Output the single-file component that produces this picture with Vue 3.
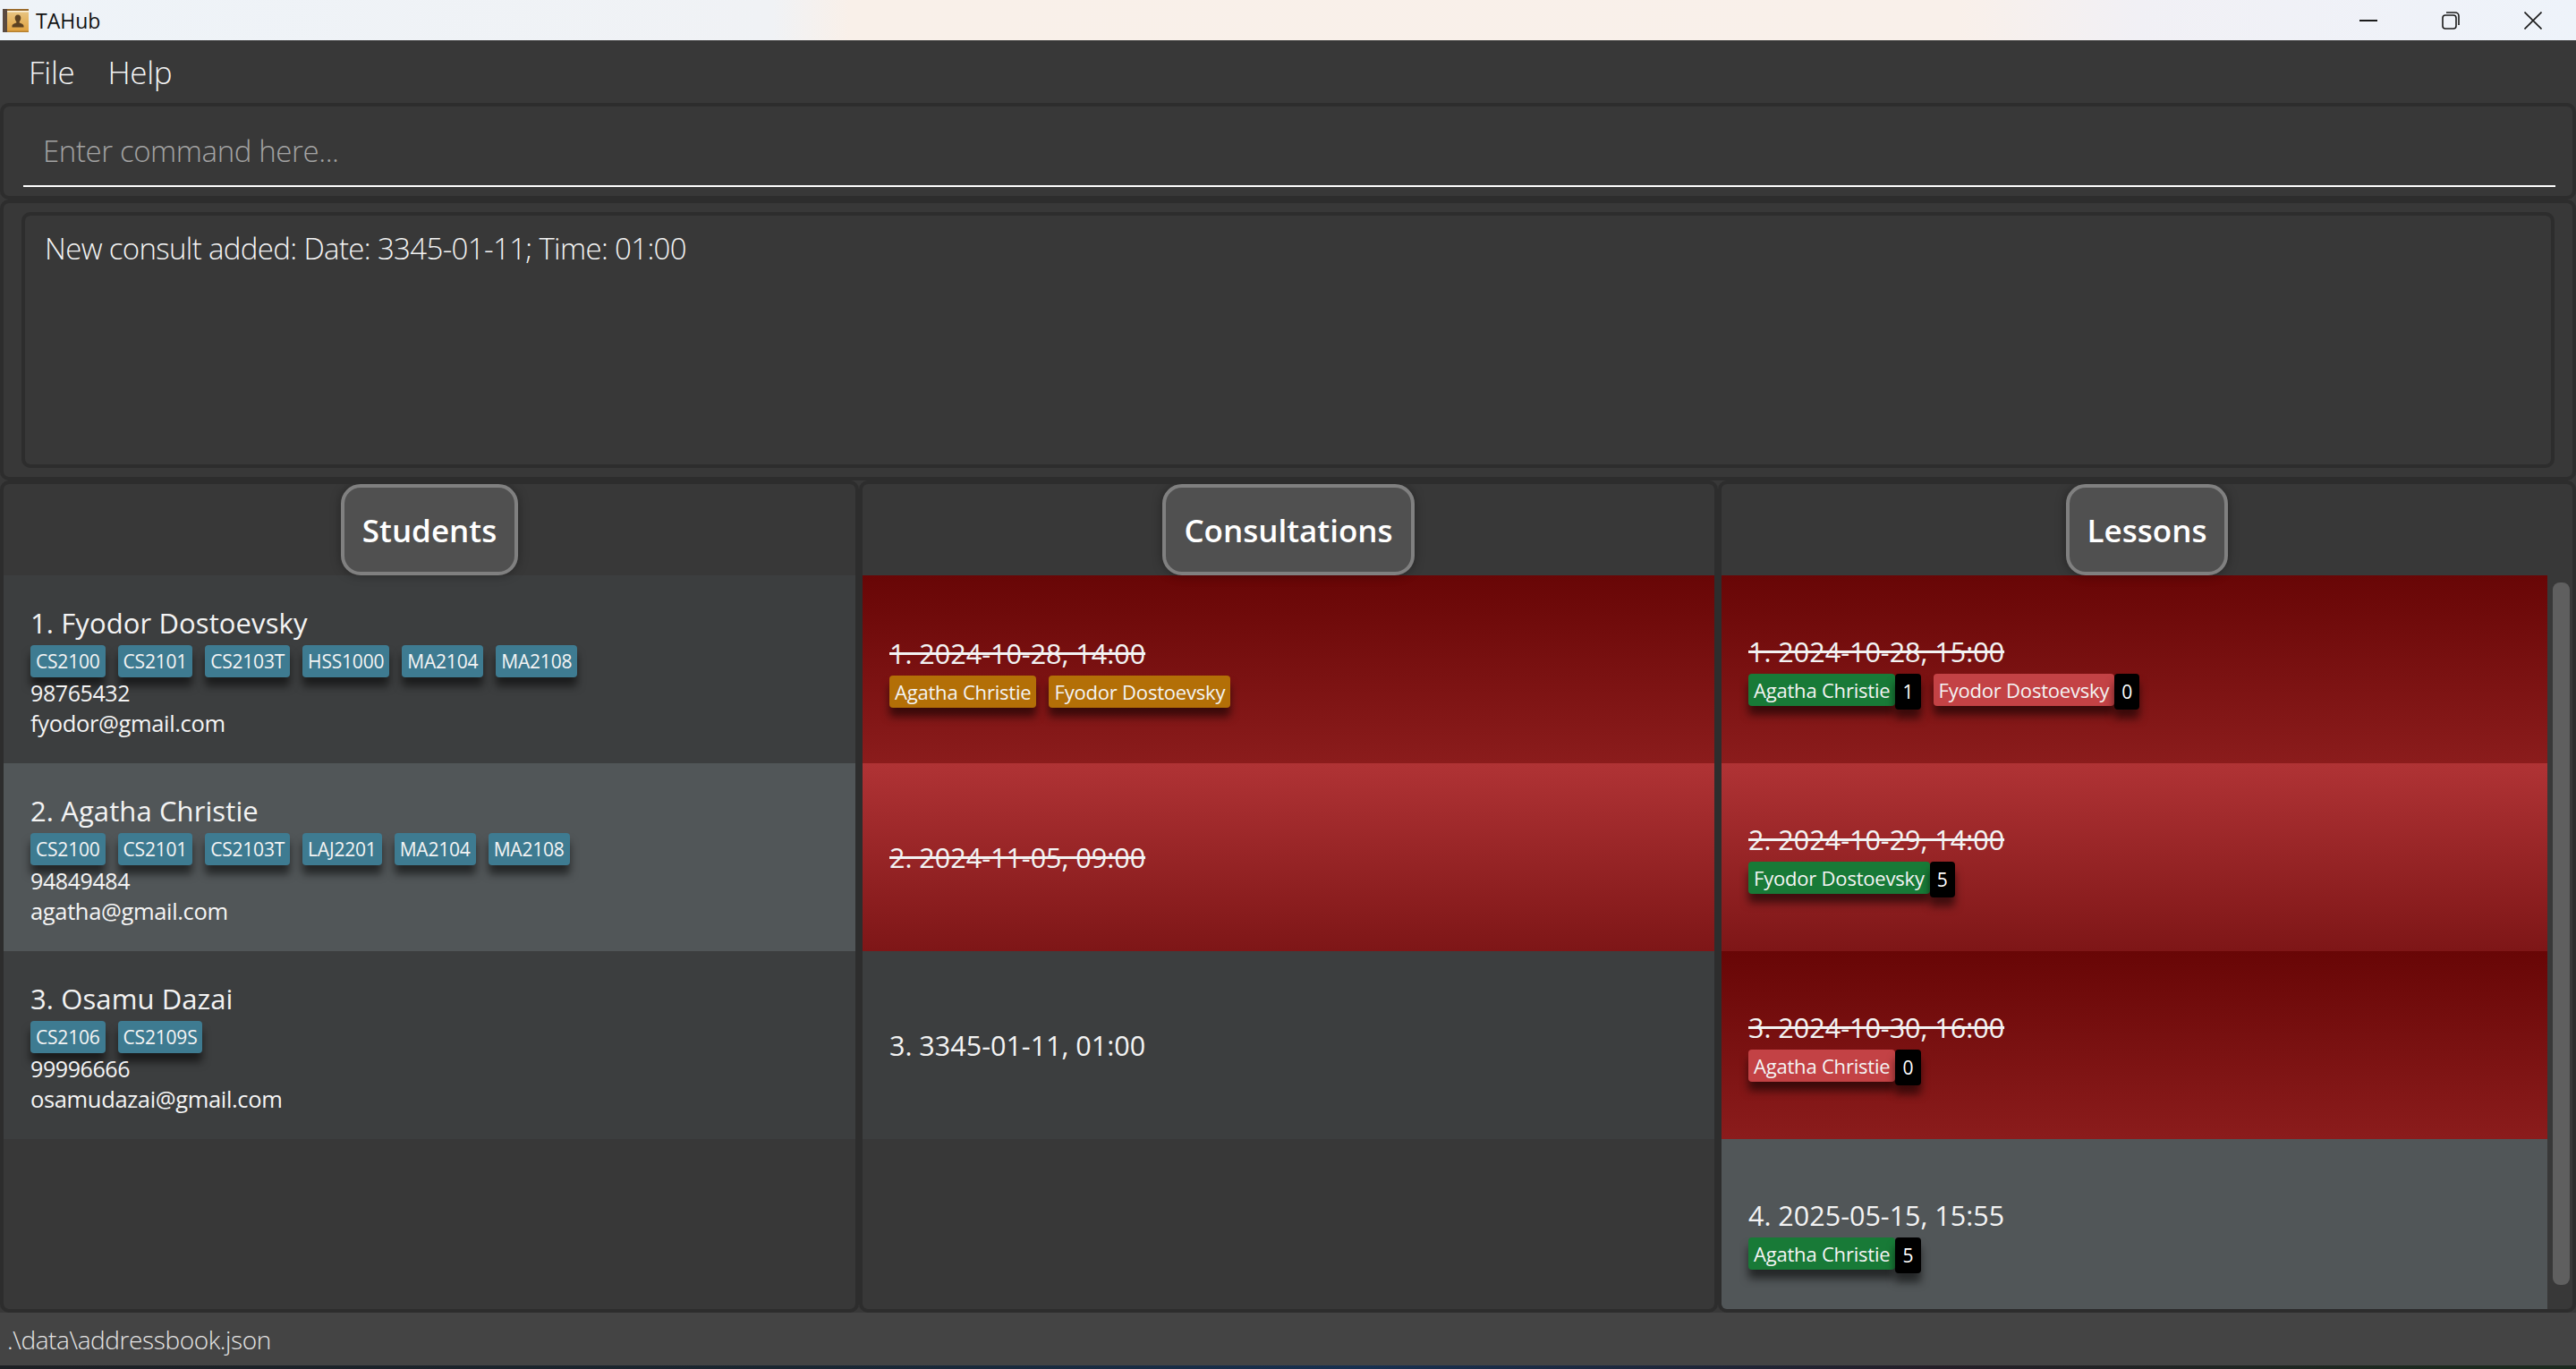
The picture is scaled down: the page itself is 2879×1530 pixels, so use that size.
<template>
  <div class="window">
    <div class="titlebar">
      <svg class="app-icon" width="30" height="28" viewBox="0 0 30 28">
        <defs>
          <linearGradient id="cover" x1="0" y1="0" x2="0" y2="1">
            <stop offset="0" stop-color="#e9c98a" />
            <stop offset="1" stop-color="#e0a03c" />
          </linearGradient>
        </defs>
        <rect x="0" y="1" width="6" height="26" fill="#5a4a40" />
        <rect x="5" y="1" width="24" height="26" fill="url(#cover)" />
        <rect x="5" y="1" width="24" height="2" fill="#9a6b2c" />
        <rect x="5" y="3" width="24" height="1.5" fill="#fbf3e0" />
        <rect x="5" y="25.5" width="24" height="1.5" fill="#b57f2e" />
        <path d="M17 7.500c2.400 0 3.500 2 3.300 4-.2 1.800-.9 3-1.600 3.800v1.200c2 .8 4.800 1.600 4.800 3.600v1.400h-13v-1.400c0-2 2.800-2.800 4.800-3.600v-1.200c-.7-.8-1.400-2-1.600-3.800-.2-2 .9-4 3.300-4z" fill="#5b4122" />
      </svg>
      <span class="app-name">TAHub</span>
      <div class="win-controls">
        <svg width="20" height="20" viewBox="0 0 20 20"><path d="M0 10h20" stroke="#1b1b1b" stroke-width="2" /></svg>
        <svg width="20" height="20" viewBox="0 0 20 20" fill="none" stroke="#1b1b1b" stroke-width="1.600">
          <rect x="1" y="4" width="15" height="15" rx="3" />
          <path d="M5 1h10a4 4 0 0 1 4 4v10" />
        </svg>
        <svg width="20" height="20" viewBox="0 0 20 20"><path d="M.5.5l19 19M19.500.5l-19 19" stroke="#1b1b1b" stroke-width="1.600" /></svg>
      </div>
    </div>

    <div class="menubar">
      <span>File</span>
      <span>Help</span>
    </div>

    <div class="command-box">
      <div class="command-input">Enter command here...</div>
    </div>

    <div class="result-box">
      <div class="result-inner">New consult added: Date: 3345-01-11; Time: 01:00</div>
    </div>

    <div class="columns">
      <section class="column">
        <div class="col-head"><div class="col-title">Students</div></div>
        <div class="col-list">
          <div v-for="(s, i) in students" :key="s.name" class="card" :class="{ selected: i === 1 }">
            <div class="card-title name">{{ i + 1 }}. {{ s.name }}</div>
            <div class="tags">
              <span v-for="t in s.tags" :key="t" class="tag module">{{ t }}</span>
            </div>
            <div class="line phone">{{ s.phone }}</div>
            <div class="line">{{ s.email }}</div>
          </div>
        </div>
      </section>

      <section class="column">
        <div class="col-head"><div class="col-title">Consultations</div></div>
        <div class="col-list">
          <div v-for="(c, i) in consults" :key="c.time" class="card" :class="c.cls">
            <div class="card-title" :class="{ done: c.done }">{{ i + 1 }}. {{ c.time }}</div>
            <div v-if="c.people.length" class="tags">
              <span v-for="p in c.people" :key="p" class="tag orange">{{ p }}</span>
            </div>
          </div>
        </div>
      </section>

      <section class="column">
        <div class="col-head"><div class="col-title">Lessons</div></div>
        <div class="col-body">
          <div class="col-list">
            <div v-for="(l, i) in lessons" :key="l.time" class="card" :class="l.cls">
              <div class="card-title" :class="{ done: l.done }">{{ i + 1 }}. {{ l.time }}</div>
              <div class="tags">
                <div v-for="p in l.people" :key="p.name" class="attend">
                  <span class="tag" :class="p.present ? 'green' : 'red'">{{ p.name }}</span>
                  <span class="count">{{ p.count }}</span>
                </div>
              </div>
            </div>
          </div>
          <div class="scrollbar"><div class="thumb"></div></div>
        </div>
      </section>
    </div>

    <div class="statusbar">.\data\addressbook.json</div>
    <div class="wallpaper"></div>
  </div>
</template>

<script setup>
const students = [
  { name: 'Fyodor Dostoevsky', tags: ['CS2100', 'CS2101', 'CS2103T', 'HSS1000', 'MA2104', 'MA2108'], phone: '98765432', email: 'fyodor@gmail.com' },
  { name: 'Agatha Christie', tags: ['CS2100', 'CS2101', 'CS2103T', 'LAJ2201', 'MA2104', 'MA2108'], phone: '94849484', email: 'agatha@gmail.com' },
  { name: 'Osamu Dazai', tags: ['CS2106', 'CS2109S'], phone: '99996666', email: 'osamudazai@gmail.com' }
]

const consults = [
  { time: '2024-10-28, 14:00', done: true, cls: 'past', people: ['Agatha Christie', 'Fyodor Dostoevsky'] },
  { time: '2024-11-05, 09:00', done: true, cls: 'past-light', people: [] },
  { time: '3345-01-11, 01:00', done: false, cls: '', people: [] }
]

const lessons = [
  { time: '2024-10-28, 15:00', done: true, cls: 'past', people: [{ name: 'Agatha Christie', present: true, count: 1 }, { name: 'Fyodor Dostoevsky', present: false, count: 0 }] },
  { time: '2024-10-29, 14:00', done: true, cls: 'past-light', people: [{ name: 'Fyodor Dostoevsky', present: true, count: 5 }] },
  { time: '2024-10-30, 16:00', done: true, cls: 'past', people: [{ name: 'Agatha Christie', present: false, count: 0 }] },
  { time: '2025-05-15, 15:55', done: false, cls: 'selected', people: [{ name: 'Agatha Christie', present: true, count: 5 }] }
]
</script>

<style>
html, body {
  margin: 0;
  background: #383838;
}
</style>

<style scoped>
.window {
  width: 2879px;
  height: 1530px;
  display: flex;
  flex-direction: column;
  overflow: hidden;
  background: #383838;
  color: #fff;
  font-family: "Open Sans", "Noto Sans", sans-serif;
}

.titlebar {
  height: 45px;
  flex: none;
  display: flex;
  align-items: center;
  padding-left: 3px;
  background: linear-gradient(90deg, #eef3f8 0%, #f0f2f5 30%, #f9f0e9 33%, #f9f0ea 76%, #f1f0f5 83%, #eef3fa 100%);
  color: #111;
}

.app-icon {
  margin-right: 7px;
}

.app-name {
  font-size: 23px;
}

.win-controls {
  margin-left: auto;
  margin-right: 38px;
  display: flex;
  align-items: center;
  gap: 72px;
}

.menubar {
  height: 70px;
  flex: none;
  display: flex;
  align-items: center;
  gap: 37px;
  padding-left: 32px;
  font-size: 35px;
  letter-spacing: -0.3px;
  font-weight: 300;
  color: #f4f4f4;
}

.command-box {
  height: 108px;
  flex: none;
  box-sizing: border-box;
  border: 4px solid #2d2d2d;
  border-radius: 10px;
  padding: 0 19px 10px 22px;
  display: flex;
  align-items: flex-end;
}

.command-input {
  flex: 1;
  height: 68px;
  border-bottom: 2px solid #fff;
  padding: 0 0 12px 22px;
  box-sizing: border-box;
  display: flex;
  align-items: center;
  font-size: 33px;
  letter-spacing: -0.4px;
  font-weight: 300;
  color: #a3a3a3;
}

.result-box {
  height: 314px;
  flex: none;
  box-sizing: border-box;
  border: 4px solid #2d2d2d;
  border-radius: 10px;
  padding: 10px 20px;
  display: flex;
}

.result-inner {
  flex: 1;
  box-sizing: border-box;
  border: 4px solid #2d2d2d;
  border-radius: 10px;
  padding: 14px 22px;
  font-size: 33px;
  letter-spacing: -0.65px;
  font-weight: 300;
  color: #f4f4f4;
}

.columns {
  height: 930px;
  flex: none;
  display: grid;
  grid-template-columns: 960px 960px 959px;
}

.column {
  min-width: 0;
  box-sizing: border-box;
  border: 4px solid #2d2d2d;
  border-radius: 10px;
  display: flex;
  flex-direction: column;
  overflow: hidden;
}

.col-head {
  height: 102px;
  flex: none;
  display: flex;
  justify-content: center;
}

.col-title {
  box-sizing: border-box;
  height: 102px;
  padding: 0 20px;
  display: flex;
  align-items: center;
  border: 4px solid #808080;
  border-radius: 22px;
  background: #505050;
  box-shadow: 0 0 12px rgba(0, 0, 0, 0.35);
  font-size: 35px;
  font-weight: 600;
  color: #fff;
  position: relative;
  z-index: 1;
}

.col-body {
  flex: 1;
  min-height: 0;
  display: flex;
}

.col-list {
  flex: 1;
  min-width: 0;
  overflow: hidden;
}

.scrollbar {
  width: 28px;
  flex: none;
  box-sizing: border-box;
  padding: 8px 3px 0 6px;
}

.thumb {
  height: 785px;
  background: #5f5f5f;
  border-radius: 8px;
}

.card {
  height: 210px;
  box-sizing: border-box;
  padding: 3px 30px 0;
  display: flex;
  flex-direction: column;
  justify-content: center;
  background: #3c3e3f;
}

.card.selected {
  background: #515658;
}

.card.past {
  background: linear-gradient(180deg, #680606 0%, #8b1c1c 100%);
}

.card.past-light {
  background: linear-gradient(180deg, #b03335 0%, #7e1617 100%);
}

.card-title {
  font-size: 30.500px;
  line-height: 44px;
  font-weight: 500;
  color: #f3f3f3;
}

.card-title.name {
  font-size: 31px;
  letter-spacing: 0.1px;
}

.card-title:only-child {
  margin-top: -3px;
}

.card-title.done {
  text-decoration: line-through;
}

.tags {
  display: flex;
  align-items: flex-start;
  gap: 14px;
  margin-top: 3px;
}

.tag {
  box-sizing: border-box;
  height: 36px;
  padding: 0 6px;
  display: flex;
  align-items: center;
  border-radius: 4px;
  box-shadow: 0 10px 10px rgba(0, 0, 0, 0.55);
  font-size: 22px;
  letter-spacing: -0.2px;
  color: #f4f4f4;
  white-space: nowrap;
}

.tag.module {
  background: #3e7b91;
  font-size: 21px;
  letter-spacing: -0.2px;
}

.tag.orange {
  background: #b36f07;
}

.tag.green {
  background: #187a37;
}

.tag.red {
  background: #c34245;
}

.attend {
  display: flex;
  align-items: flex-start;
}

.count {
  height: 40px;
  box-sizing: border-box;
  padding: 0 8px;
  display: flex;
  align-items: center;
  border-radius: 4px;
  background: #000;
  box-shadow: 0 10px 10px rgba(0, 0, 0, 0.55);
  font-size: 21px;
  color: #fff;
}

.line {
  font-size: 25.500px;
  line-height: 34px;
  letter-spacing: -0.35px;
  color: #f4f4f4;
}

.line.phone {
  font-size: 25px;
  letter-spacing: -0.4px;
}

.statusbar {
  height: 59px;
  flex: none;
  display: flex;
  align-items: center;
  padding-left: 8px;
  background: #444;
  font-size: 28px;
  letter-spacing: -0.4px;
  font-weight: 300;
  color: #e4e4e4;
}

.wallpaper {
  height: 4px;
  flex: none;
  background: linear-gradient(90deg, #1d2024, #1a2630 30%, #173050 53%, #241f28 75%, #1c2a1f 95%);
}
</style>
